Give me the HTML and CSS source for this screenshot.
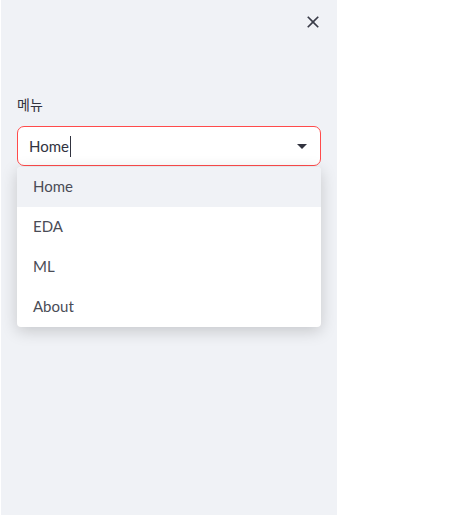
FILE: index.html
```html
<!DOCTYPE html>
<html lang="ko">
<head>
<meta charset="utf-8">
<title>Sidebar</title>
<link rel="stylesheet" href="styles.css">
</head>
<body>
<aside class="sidebar">
  <div class="sidebar-header">
    <button class="close-btn" aria-label="Close">
      <svg width="20" height="20" viewBox="0 0 24 24"><path fill="currentColor" d="M19 6.41L17.59 5 12 10.59 6.41 5 5 6.41 10.59 12 5 17.59 6.41 19 12 13.41 17.59 19 19 17.59 13.41 12z"/></svg>
    </button>
  </div>
  <div class="sidebar-content">
    <label class="field-label">메뉴</label>
    <div class="select-wrap">
      <div class="select-box">
        <span class="select-value">Home</span><span class="caret"></span>
        <svg class="select-arrow" width="24" height="24" viewBox="0 0 24 24"><path fill="currentColor" d="M7 10l5 5 5-5z"/></svg>
      </div>
      <ul class="menu">
        <li class="menu-item active">Home</li>
        <li class="menu-item">EDA</li>
        <li class="menu-item">ML</li>
        <li class="menu-item">About</li>
      </ul>
    </div>
  </div>
</aside>
</body>
</html>
```
FILE: styles.css
```css
* { box-sizing: border-box; }
html, body {
  margin: 0;
  padding: 0;
  background: #ffffff;
}
body {
  font-family: Lato, "Noto Sans", "Noto Sans CJK KR", sans-serif;
  color: #31333f;
}
.sidebar {
  width: 336px;
  height: 515px;
  margin-left: 1px;
  background: #f0f2f6;
}
.sidebar-header {
  height: 44px;
  display: flex;
  justify-content: flex-end;
  align-items: center;
  padding-right: 14px;
}
.close-btn {
  border: 0;
  background: transparent;
  padding: 0;
  width: 20px;
  height: 20px;
  color: #3a3c48;
  display: flex;
}
.sidebar-content {
  padding: 0 16px;
  margin-top: 50px;
}
.field-label {
  display: block;
  font-family: "Noto Sans CJK KR", sans-serif;
  font-size: 14px;
  line-height: 21px;
  color: #31333f;
  margin-bottom: 11px;
}
.select-wrap {
  position: relative;
}
.select-box {
  height: 40px;
  background: #ffffff;
  border: 1px solid #ff4b4b;
  border-radius: 7px;
  display: flex;
  align-items: center;
  padding-left: 11px;
  padding-right: 6px;
}
.select-value {
  font-size: 15px;
  color: #31333f;
}
.caret {
  width: 1px;
  height: 21px;
  background: #31333f;
  margin-left: 1px;
}
.select-arrow {
  margin-left: auto;
  color: #31333f;
}
.menu {
  position: absolute;
  top: 41px;
  left: 0;
  right: 0;
  margin: 0;
  padding: 0;
  list-style: none;
  background: #ffffff;
  border-radius: 4px;
  box-shadow: 0 4px 16px rgba(0, 0, 0, 0.18);
  overflow: hidden;
}
.menu-item {
  height: 40px;
  display: flex;
  align-items: center;
  padding-left: 16px;
  padding-bottom: 2px;
  font-size: 15px;
  color: #4a4c56;
}
.menu-item.active {
  background: #f0f2f6;
}
```
